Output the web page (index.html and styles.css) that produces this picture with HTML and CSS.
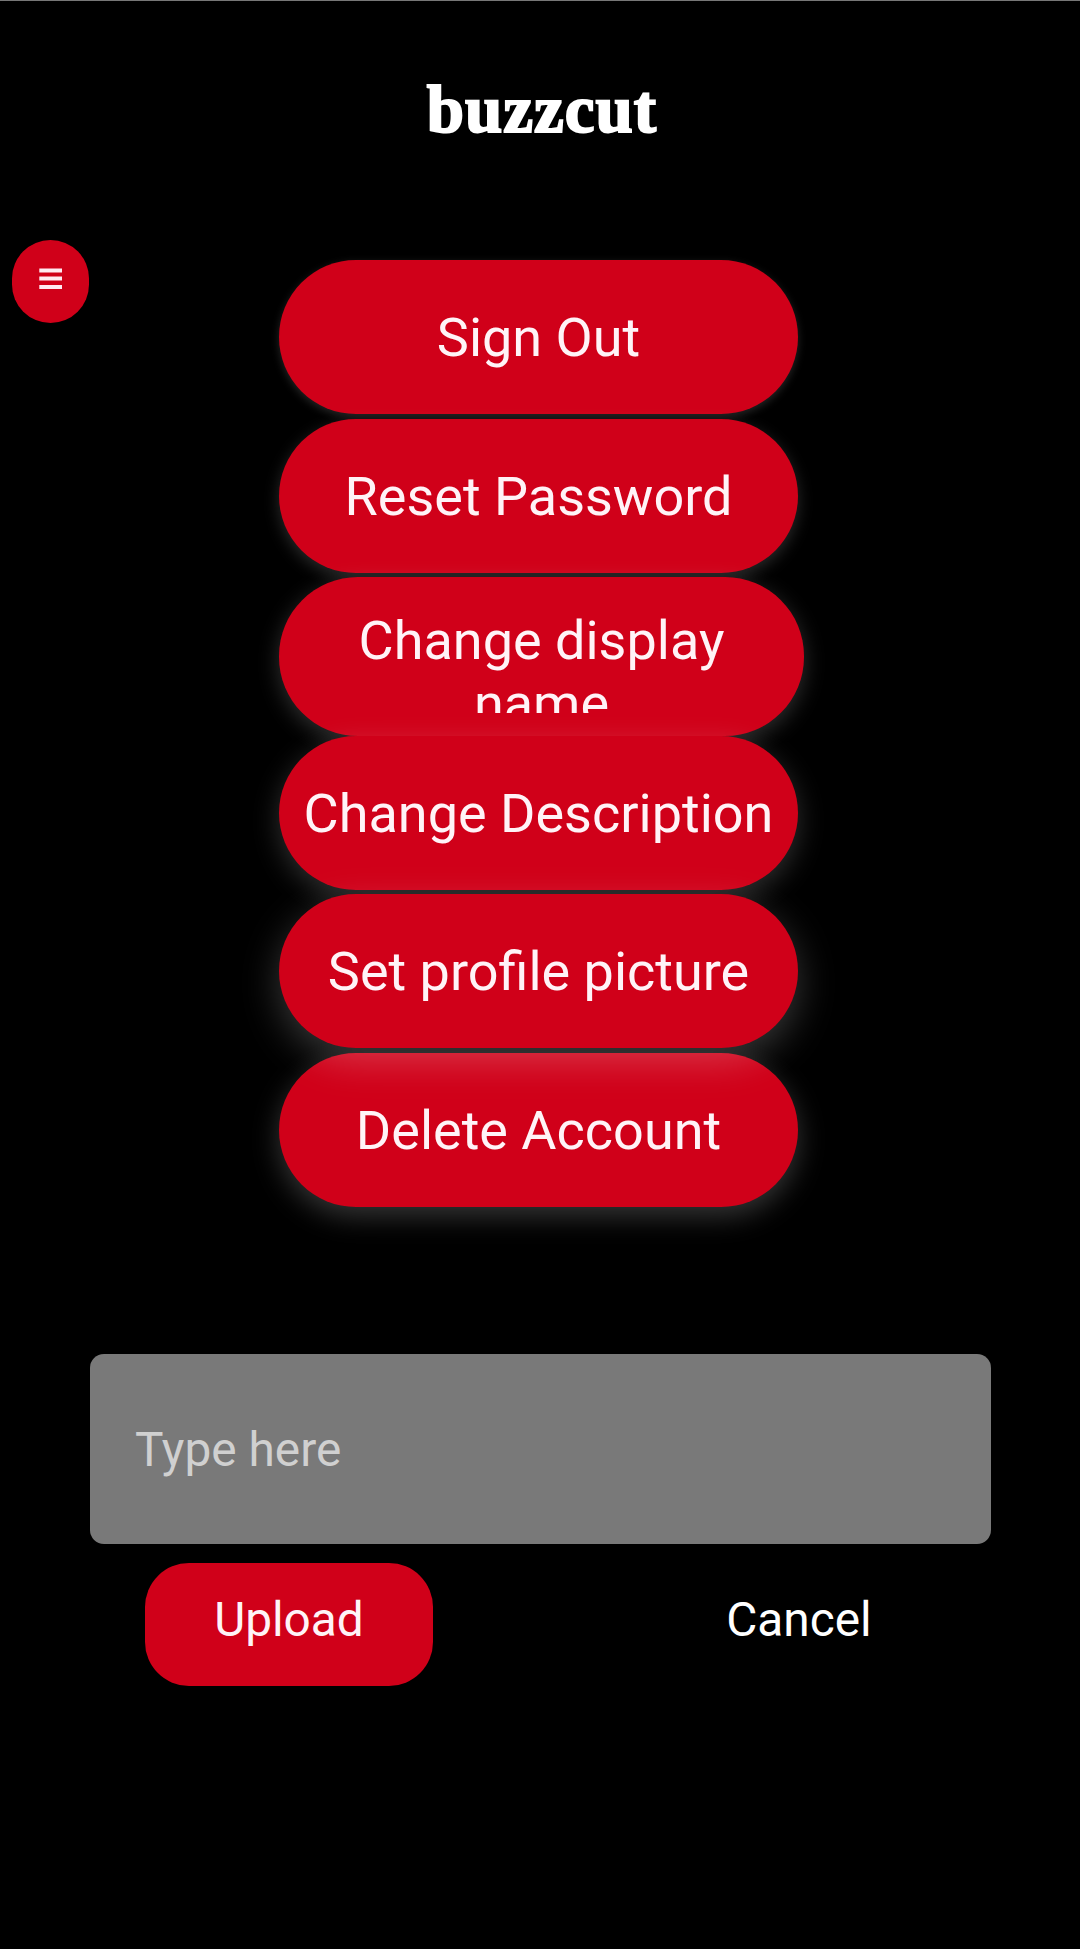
FILE: index.html
```html
<!DOCTYPE html>
<html lang="en">
<head>
<meta charset="utf-8">
<title>buzzcut</title>
<link rel="stylesheet" href="styles.css">
</head>
<body>
<header class="header"><h1 class="logo">buzzcut</h1></header>
<main class="content">
  <button class="menu" aria-label="Menu">
    <svg class="menu-icon" width="24" height="22" viewBox="0 0 24 22"><path d="M0.3 2.5H23M0.3 10.5H23M0.3 19H23" stroke="#ffeaf2" stroke-width="4" fill="none"/></svg>
  </button>
  <nav class="actions">
    <button class="action level-1"><span class="label">Sign Out</span></button>
    <button class="action level-2"><span class="label">Reset Password</span></button>
    <button class="action action-tall level-3"><span class="label">Change display name</span></button>
    <button class="action action-joined level-4"><span class="label">Change Description</span></button>
    <button class="action level-6"><span class="label">Set profile picture</span></button>
    <button class="action action-last level-5"><span class="label">Delete Account</span></button>
  </nav>
</main>
<form class="editor">
  <input class="field" type="text" placeholder="Type here">
  <div class="buttons">
    <button class="button upload" type="button">Upload</button>
    <button class="button cancel" type="button">Cancel</button>
  </div>
</form>
</body>
</html>
```
FILE: styles.css
```css
* { box-sizing: border-box; }

body {
  margin: 0;
  height: 1949px;
  overflow: hidden;
  border-top: 1px solid #777;
  background: #000;
  color: #fff;
  font-family: Roboto, sans-serif;
}

button {
  border: 0;
  padding: 0;
  background: #d00019;
  color: #fff3f7;
  font-family: inherit;
}

.header {
  height: 238px;
  padding: 69px 0 0 4px;
  text-align: center;
}

.logo {
  margin: 0;
  font: bold 67px/78px "Liberation Serif", serif;
  letter-spacing: 1px;
  -webkit-text-stroke: 2px #fff;
}

.content {
  display: flex;
  align-items: flex-start;
  height: 1115px;
  padding-left: 12px;
}

.menu {
  display: flex;
  justify-content: center;
  width: 77px;
  height: 83px;
  margin-top: 1px;
  padding-top: 28px;
  border-radius: 39px;
}

.menu-icon { display: block; }

.actions {
  display: flex;
  flex-direction: column;
  margin: 21px 0 0 190px;
}

.action {
  position: relative;
  display: flex;
  justify-content: center;
  width: 519px;
  height: 154px;
  margin-bottom: 5px;
  padding-top: 46px;
  border-radius: 77px;
  font-size: 54px;
  line-height: 63px;
}

.level-2, .action-joined { margin-bottom: 4px; }

.action-tall {
  width: 525px;
  height: 159px;
  margin-bottom: 0;
  padding: 32px 60px 23px;
  border-radius: 79px;
}

.action-tall .label {
  height: 104px;
  overflow: hidden;
}

.level-1 { z-index: 1; box-shadow: 0 3px 8px rgba(255, 255, 255, .15); }
.level-2 { z-index: 2; box-shadow: 0 5px 16px rgba(255, 255, 255, .17); }
.level-3 { z-index: 3; box-shadow: 0 6px 22px rgba(255, 255, 255, .19); }
.level-4 { z-index: 4; box-shadow: 0 8px 28px rgba(255, 255, 255, .19); }
.level-5 { z-index: 5; box-shadow: 0 9px 28px rgba(255, 255, 255, .21); }
.level-6 { z-index: 6; box-shadow: 0 12px 38px rgba(255, 255, 255, .22); }

.editor {
  width: 901px;
  margin-left: 90px;
}

.field {
  display: block;
  width: 901px;
  height: 190px;
  padding: 2px 45px 0;
  border: 0;
  border-radius: 14px;
  background: #797979;
  color: #fff;
  font: 47.8px/56px Roboto, sans-serif;
}

.field::placeholder { color: #d0d0d0; opacity: 1; }

.buttons {
  display: flex;
  justify-content: space-between;
  padding: 19px 48px 0 55px;
}

.button {
  width: 288px;
  height: 123px;
  padding-bottom: 10px;
  border-radius: 44px;
  font-size: 47.8px;
}

.cancel {
  background: none;
  color: #fff;
}
```
